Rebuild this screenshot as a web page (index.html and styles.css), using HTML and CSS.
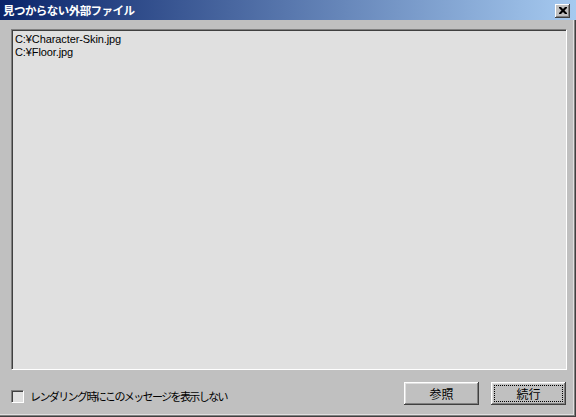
FILE: index.html
```html
<!DOCTYPE html>
<html lang="ja">
<head>
<meta charset="utf-8">
<link rel="stylesheet" href="styles.css">
</head>
<body>
<div class="window">
  <div class="titlebar">
    <span class="title">見つからない外部ファイル</span>
    <button class="close" aria-label="close">
      <svg width="8" height="7" viewBox="0 0 8 7"><path d="M0 0h2l2 2 2-2h2v1l-2.5 2.5L8 6v1H6L4 5 2 7H0V6l2.5-2.5L0 1z" fill="#000"/></svg>
    </button>
  </div>
  <div class="content">
    <div class="listbox">
      <div class="item">C:¥Character-Skin.jpg</div>
      <div class="item">C:¥Floor.jpg</div>
    </div>
    <div class="footer">
      <label class="check"><span class="box"></span><span class="label">レンダリング時にこのメッセージを表示しない</span></label>
      <div class="buttons">
        <button class="btn">参照</button>
        <button class="btn focus"><span class="focusrect">続行</span></button>
      </div>
    </div>
  </div>
</div>
</body>
</html>
```
FILE: styles.css
```css
html, body { margin: 0; padding: 0; }
body { width: 576px; height: 417px; overflow: hidden; background: #c0c0c0; font-family: "Noto Sans CJK JP", "Liberation Sans", sans-serif; }
.window {
  width: 576px; height: 417px; box-sizing: border-box;
  background: #c0c0c0;
  display: flex; flex-direction: column;
  box-shadow: inset -1px -1px #404040, inset -2px -2px #808080, inset -3px -3px #dfdfdf;
}
.titlebar {
  height: 20px; flex: none;
  background: linear-gradient(to right, #0a246a, #a6caf0);
  display: flex; align-items: center; justify-content: space-between;
  padding: 0 6px 0 3px; box-sizing: border-box;
}
.title { color: #fff; font-weight: bold; font-size: 11.5px; letter-spacing: -0.55px; line-height: 20px; }
.close {
  width: 15px; height: 14px; padding: 0; margin: 0; border: 0;
  background: #c0c0c0; display: flex; align-items: center; justify-content: center;
  box-shadow: inset -1px -1px #404040, inset 1px 1px #fff, inset -2px -2px #808080;
  margin-top: 1px;
}
.content { flex: 1; display: flex; flex-direction: column; padding: 9px 9px 0 11px; }
.listbox {
  height: 341px; box-sizing: border-box;
  background: #e0e0e0;
  border: 1px solid; border-color: #808080 #fff #fff #808080;
  box-shadow: inset 1px 1px #404040;
  padding: 3px 3px;
  font-family: "Liberation Sans", sans-serif; font-size: 11px; letter-spacing: -0.1px; line-height: 13px; color: #000;
}
.item { white-space: nowrap; }
.footer { display: flex; justify-content: space-between; align-items: flex-start; padding-top: 12px; }
.check { display: flex; align-items: center; gap: 6px; margin-top: 8px; }
.box {
  width: 13px; height: 13px; box-sizing: border-box; background: #e0e0e0;
  border: 1px solid; border-color: #808080 #fff #fff #808080;
  box-shadow: inset 1px 1px #404040, inset -1px -1px #dfdfdf;
}
.label { font-size: 11px; letter-spacing: -1.6px; color: #000; line-height: 13px; }
.buttons { display: flex; gap: 12px; margin-right: 1px; }
.btn {
  width: 75px; height: 23px; padding: 0; margin: 0; border: 0;
  background: #c0c0c0; color: #000;
  font-family: "Noto Sans CJK JP", sans-serif; font-size: 12px; line-height: 23px;
  box-shadow: inset -1px -1px #404040, inset 1px 1px #fff, inset -2px -2px #808080, inset 2px 2px #dfdfdf;
  display: flex; align-items: center; justify-content: center;
}
.focus { padding: 4px; box-sizing: border-box; }
.focusrect {
  flex: 1; align-self: stretch; display: flex; align-items: center; justify-content: center;
  outline: 1px dotted #000; line-height: 15px;
}
```
